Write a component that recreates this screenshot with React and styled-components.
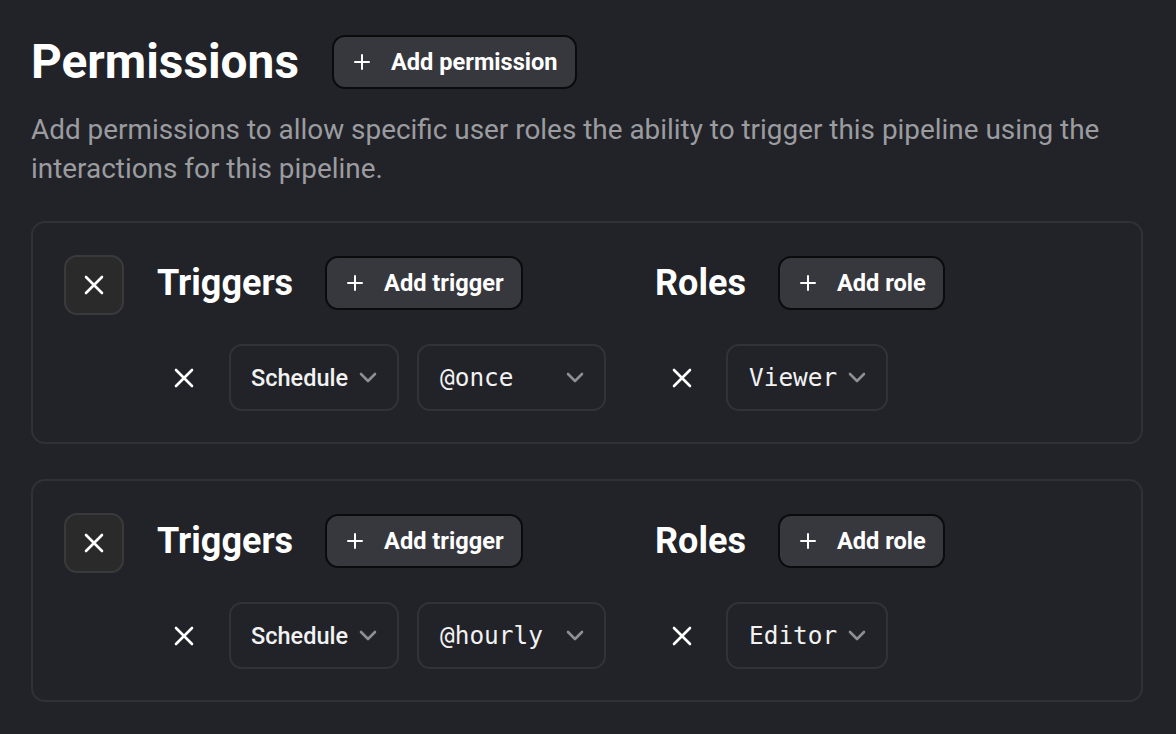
import React from "react";
import styled, { createGlobalStyle } from "styled-components";

const GlobalStyle = createGlobalStyle`
  html, body {
    margin: 0;
    padding: 0;
    background: #222328;
  }
  body {
    font-family: Roboto, "Noto Sans", sans-serif;
    color: #fff;
  }
`;

const Page = styled.div`
  padding: 35px 33px 30px 31px;
  min-height: 734px;
  box-sizing: border-box;
`;

const Header = styled.div`
  display: flex;
  align-items: center;
  gap: 33px;
`;

const Title = styled.h1`
  margin: 0;
  font-size: 47.8px;
  font-weight: 700;
  line-height: 54px;
`;

const Description = styled.p`
  margin: 21px 0 33px;
  font-size: 27.9px;
  line-height: 39px;
  color: #9b9ca0;
  max-width: 1100px;
`;

const Cards = styled.div`
  display: flex;
  flex-direction: column;
  gap: 35px;
`;

const Card = styled.div`
  display: flex;
  align-items: flex-start;
  gap: 33px;
  padding: 32px 31px 31px;
  border: 2px solid #303137;
  border-radius: 14px;
`;

const RemoveBox = styled.button`
  flex: none;
  display: flex;
  align-items: center;
  justify-content: center;
  width: 60px;
  height: 60px;
  padding: 0;
  background: #2a2a2b;
  border: 2px solid #3a3a3d;
  border-radius: 13px;
  color: #fff;
`;

const Sections = styled.div`
  display: flex;
  gap: 49px;
`;

const Section = styled.div`
  display: flex;
  flex-direction: column;
  gap: 34px;
`;

const SectionHead = styled.div`
  display: flex;
  align-items: center;
  gap: 32px;
  margin-top: 1px;
`;

const SectionTitle = styled.h2`
  margin: 0;
  font-size: 36px;
  font-weight: 700;
  line-height: 54px;
`;

const AddButton = styled.button`
  display: flex;
  align-items: center;
  gap: 21px;
  height: 54px;
  padding: 0 17px 0 20px;
  background: #37383e;
  border: 2px solid #0b0b0d;
  border-radius: 13px;
  color: #fff;
  font-family: Roboto, sans-serif;
  font-size: 23.6px;
  font-weight: 700;
`;

const ItemRow = styled.div`
  display: flex;
  align-items: center;
  gap: 18px;
  padding-left: 15px;
`;

const RemoveIcon = styled.span`
  display: flex;
  align-items: center;
  justify-content: center;
  width: 24px;
  height: 24px;
  margin-right: ${(p) => p.$gap - 18}px;
`;

const Select = styled.div`
  display: flex;
  align-items: center;
  justify-content: space-between;
  gap: 11px;
  box-sizing: border-box;
  height: 67px;
  width: ${(p) => (p.$width ? `${p.$width}px` : "auto")};
  padding: 0 20px 0 ${(p) => (p.$mono ? 21 : 20)}px;
  border: 2px solid #323338;
  border-radius: 13px;
  font-family: ${(p) =>
    p.$mono ? `"DejaVu Sans Mono", "Liberation Mono", monospace` : `Roboto, sans-serif`};
  font-size: ${(p) => (p.$mono ? 24.4 : 23.5)}px;
  font-weight: ${(p) => (p.$mono ? 400 : 500)};
  color: #f2f2f3;
`;

const XIcon = () => (
  <svg width="20" height="20" viewBox="0 0 20 20" fill="none">
    <path d="M2 2 L18 18 M18 2 L2 18" stroke="#fff" strokeWidth="2.6" strokeLinecap="round" />
  </svg>
);

const PlusIcon = () => (
  <svg width="16" height="16" viewBox="0 0 16 16" fill="none">
    <path d="M8 1 V15 M1 8 H15" stroke="#fff" strokeWidth="2" strokeLinecap="round" />
  </svg>
);

const Chevron = () => (
  <svg width="18" height="11" viewBox="0 0 18 11" fill="none">
    <path d="M2 2 L9 9 L16 2" stroke="#8e8e93" strokeWidth="2.6" strokeLinecap="round" strokeLinejoin="round" />
  </svg>
);

const permissions = [
  { trigger: "Schedule", value: "@once", role: "Viewer" },
  { trigger: "Schedule", value: "@hourly", role: "Editor" },
];

const Add = ({ children }) => (
  <AddButton>
    <PlusIcon />
    {children}
  </AddButton>
);

export default function App() {
  return (
    <Page>
      <GlobalStyle />
      <Header>
        <Title>Permissions</Title>
        <Add>Add permission</Add>
      </Header>
      <Description>
        Add permissions to allow specific user roles the ability to trigger this pipeline using the
        interactions for this pipeline.
      </Description>
      <Cards>
        {permissions.map((p, i) => (
          <Card key={i}>
            <RemoveBox>
              <XIcon />
            </RemoveBox>
            <Sections>
              <Section>
                <SectionHead>
                  <SectionTitle>Triggers</SectionTitle>
                  <Add>Add trigger</Add>
                </SectionHead>
                <ItemRow>
                  <RemoveIcon $gap={33}>
                    <XIcon />
                  </RemoveIcon>
                  <Select>
                    {p.trigger}
                    <Chevron />
                  </Select>
                  <Select $mono $width={189}>
                    {p.value}
                    <Chevron />
                  </Select>
                </ItemRow>
              </Section>
              <Section>
                <SectionHead>
                  <SectionTitle>Roles</SectionTitle>
                  <Add>Add role</Add>
                </SectionHead>
                <ItemRow>
                  <RemoveIcon $gap={32}>
                    <XIcon />
                  </RemoveIcon>
                  <Select $mono>
                    {p.role}
                    <Chevron />
                  </Select>
                </ItemRow>
              </Section>
            </Sections>
          </Card>
        ))}
      </Cards>
    </Page>
  );
}
